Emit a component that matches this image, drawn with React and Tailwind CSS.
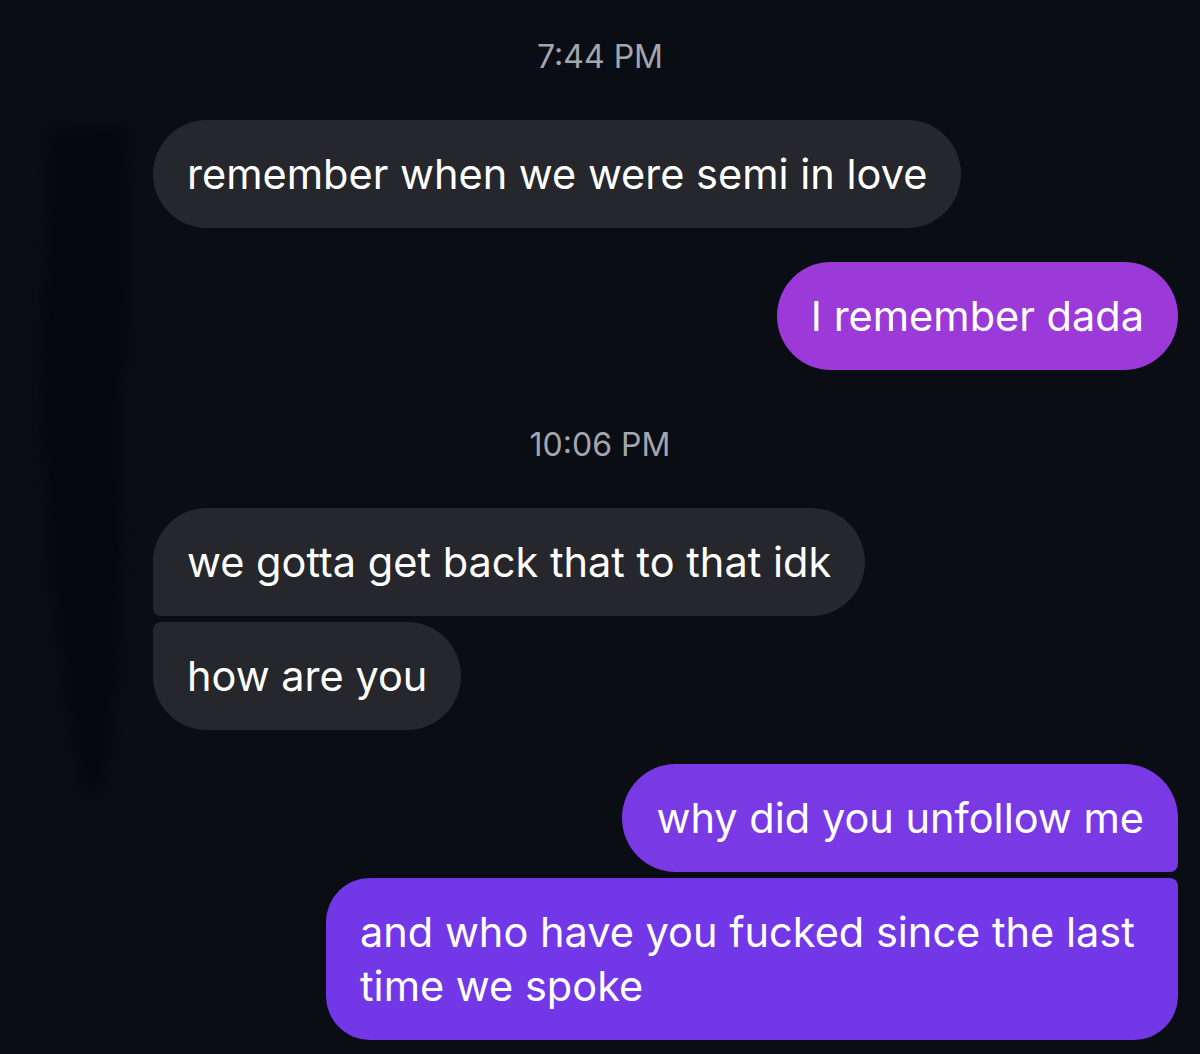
import React from "react";

const font = { fontFamily: "Inter, 'Liberation Sans', sans-serif" };

function Stamp({ children, className = "" }) {
  return (
    <div className={"w-full text-center text-[32px] leading-[40px] text-[#a3a6ad] " + className}>
      {children}
    </div>
  );
}

function Bubble({ children, className = "" }) {
  return (
    <div className={"px-[34px] py-[27px] text-[41.5px] leading-[54px] text-white " + className}>
      {children}
    </div>
  );
}

export default function App() {
  return (
    <div
      className="relative w-[1200px] h-[1054px] overflow-hidden bg-[#0b0d14] flex flex-col"
      style={font}
    >
      <svg
        className="absolute left-0 top-0 pointer-events-none blur-[6px]"
        width="200"
        height="860"
        viewBox="0 0 200 860"
      >
        <path
          d="M50 130 L126 124 L130 300 L120 420 L124 560 L116 700 L104 790 L82 792 L66 700 L48 560 L42 420 L44 260 Z"
          fill="#07080e"
        />
      </svg>

      <div className="relative flex flex-col pt-[37px]">
        <Stamp>7:44 PM</Stamp>

        <div className="flex pl-[153px] pr-[22px] mt-[43px]">
          <Bubble className="bg-[#25272c] rounded-[54px]">remember when we were semi in love</Bubble>
        </div>

        <div className="flex justify-end pl-[153px] pr-[22px] mt-[34px]">
          <Bubble className="bg-[#9b3ad8] rounded-[54px]">I remember dada</Bubble>
        </div>

        <Stamp className="mt-[55px]">10:06 PM</Stamp>

        <div className="flex pl-[153px] pr-[22px] mt-[43px]">
          <Bubble className="bg-[#25272c] rounded-[54px] rounded-bl-[8px]">
            we gotta get back that to that idk
          </Bubble>
        </div>

        <div className="flex pl-[153px] pr-[22px] mt-[6px]">
          <Bubble className="bg-[#25272c] rounded-[54px] rounded-tl-[8px]">how are you</Bubble>
        </div>

        <div className="flex justify-end pl-[153px] pr-[22px] mt-[34px]">
          <Bubble className="bg-[#793ae6] rounded-[54px] rounded-br-[8px]">why did you unfollow me</Bubble>
        </div>

        <div className="flex justify-end pl-[326px] pr-[22px] mt-[6px]">
          <Bubble className="bg-[#7238e8] rounded-[44px] rounded-tr-[8px]">
            and who have you fucked since the last time we spoke
          </Bubble>
        </div>
      </div>
    </div>
  );
}
